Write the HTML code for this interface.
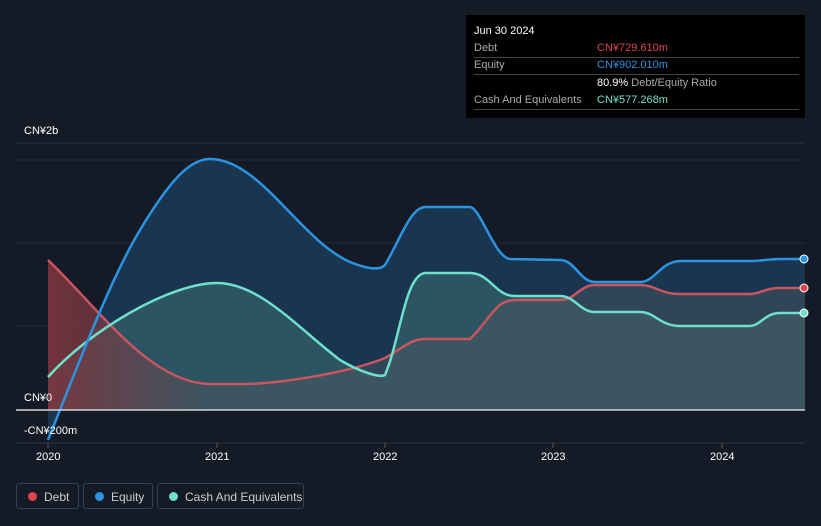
<!DOCTYPE html>
<html><head><meta charset="utf-8"><style>
body{margin:0;width:821px;height:526px;background:#151b26;font-family:"Liberation Sans",sans-serif;overflow:hidden;position:relative}
.tt{position:absolute;left:466px;top:15px;width:339px;height:103px;background:#000;color:#fff;font-size:11px}
.tt .r{position:absolute;left:8px;right:6px;border-bottom:1px solid #444;height:17px;line-height:17px;color:#aaa}
.tt .v{position:absolute;left:123px}
.lg{position:absolute;top:483px;height:26px;border:1px solid #3a414c;border-radius:3px;color:#ccc;font-size:12px;line-height:26px;box-sizing:border-box}
.lg i{position:absolute;left:11px;top:8px;width:9px;height:9px;border-radius:50%}
.lg span{position:absolute;left:27px}
.ax{position:absolute;color:#fff;font-size:11px}
</style></head><body>
<svg width="821" height="526" style="position:absolute;left:0;top:0">
<defs><linearGradient id="rg" x1="0" x2="1" y1="0" y2="0"><stop offset="0" stop-color="#8a2f38" stop-opacity="0.75"/><stop offset="1" stop-color="#8a2f38" stop-opacity="0"/></linearGradient></defs>
<line x1="16" y1="143" x2="805" y2="143" stroke="#2e3540"/>
<line x1="16" y1="160" x2="805" y2="160" stroke="#232a35"/>
<line x1="16" y1="243" x2="805" y2="243" stroke="#232a35"/>
<line x1="16" y1="326" x2="805" y2="326" stroke="#232a35"/>
<line x1="16" y1="443" x2="805" y2="443" stroke="#2e3540"/>
<path d="M48,440 C80,360 110,280 140,230 C170,180 190,159 210,159 C260,159 300,240 350,262 C370,270 380,270 385,265 C400,240 410,208 425,207 L470,207 C480,207 495,258 510,259 L560,260 C575,260 580,282 595,282 L640,282 C655,282 660,262 680,261 L750,261 C760,261 770,259 780,259 L805,259 L805,410 L48,410Z" fill="#1a3a58" opacity="0.85"/>
<path d="M48,377 C90,330 170,283 217,283 C260,283 300,330 340,360 C360,372 380,378 385,375 C400,340 405,275 425,273 L470,273 C490,273 495,296 515,296 L560,296 C575,296 580,312 595,312 L640,312 C655,312 660,326 680,326 L750,326 C760,326 765,313 780,313 L805,313 L805,410 L48,410Z" fill="#3d6e72" opacity="0.55"/>
<path d="M48,260 C100,310 150,383 210,384 L250,384 C290,382 350,372 385,358 C400,350 410,339 425,339 L470,339 C490,320 495,300 515,300 L560,300 C575,300 580,285 595,285 L640,285 C655,285 660,294 680,294 L750,294 C760,294 765,288 780,288 L805,288 L805,410 L48,410Z" fill="#4a5560" opacity="0.5"/>
<path d="M48,260 C100,310 150,383 210,384 L210,410 L48,410Z" fill="url(#rg)"/>
<path d="M48,260 C100,310 150,383 210,384 L250,384 C290,382 350,372 385,358 C400,350 410,339 425,339 L470,339 C490,320 495,300 515,300 L560,300 C575,300 580,285 595,285 L640,285 C655,285 660,294 680,294 L750,294 C760,294 765,288 780,288 L805,288" fill="none" stroke="#c95560" stroke-width="2.5"/>
<path d="M48,377 C90,330 170,283 217,283 C260,283 300,330 340,360 C360,372 380,378 385,375 C400,340 405,275 425,273 L470,273 C490,273 495,296 515,296 L560,296 C575,296 580,312 595,312 L640,312 C655,312 660,326 680,326 L750,326 C760,326 765,313 780,313 L805,313" fill="none" stroke="#6ee0cc" stroke-width="2.5"/>
<path d="M48,440 C80,360 110,280 140,230 C170,180 190,159 210,159 C260,159 300,240 350,262 C370,270 380,270 385,265 C400,240 410,208 425,207 L470,207 C480,207 495,258 510,259 L560,260 C575,260 580,282 595,282 L640,282 C655,282 660,262 680,261 L750,261 C760,261 770,259 780,259 L805,259" fill="none" stroke="#2b94e2" stroke-width="2.5"/>
<line x1="16" y1="410" x2="805" y2="410" stroke="#cfd3d8" stroke-width="1.5"/>
<circle cx="804" cy="259" r="4" fill="#2b94e2" stroke="#fff"/>
<circle cx="804" cy="288" r="4" fill="#e0454f" stroke="#fff"/>
<circle cx="804" cy="313" r="4" fill="#6ee0cc" stroke="#fff"/>
<g stroke="#555"><line x1="48" y1="443" x2="48" y2="448"/><line x1="217" y1="443" x2="217" y2="448"/><line x1="385" y1="443" x2="385" y2="448"/><line x1="553" y1="443" x2="553" y2="448"/><line x1="722" y1="443" x2="722" y2="448"/></g>
</svg>
<div class="ax" style="left:24px;top:125px">CN¥2b</div>
<div class="ax" style="left:24px;top:392px">CN¥0</div>
<div class="ax" style="left:24px;top:425px">-CN¥200m</div>
<div class="ax" style="left:36px;top:451px">2020</div>
<div class="ax" style="left:205px;top:451px">2021</div>
<div class="ax" style="left:373px;top:451px">2022</div>
<div class="ax" style="left:541px;top:451px">2023</div>
<div class="ax" style="left:710px;top:451px">2024</div>
<div class="tt">
<div style="position:absolute;left:8px;top:10px">Jun 30 2024</div>
<div class="r" style="top:25px">Debt<span class="v" style="color:#e0454f">CN¥729.610m</span></div>
<div class="r" style="top:42px">Equity<span class="v" style="color:#2b94e2">CN¥902.010m</span></div>
<div class="r" style="top:60px;border:none"><span class="v" style="color:#aaa"><b style="color:#fff;font-weight:normal">80.9%</b> Debt/Equity Ratio</span></div>
<div class="r" style="top:77px">Cash And Equivalents<span class="v" style="color:#6ee0cc">CN¥577.268m</span></div>
</div>
<div class="lg" style="left:16px;width:63px"><i style="background:#e0454f"></i><span>Debt</span></div>
<div class="lg" style="left:83px;width:70px"><i style="background:#2b94e2"></i><span>Equity</span></div>
<div class="lg" style="left:157px;width:147px"><i style="background:#6ee0cc"></i><span>Cash And Equivalents</span></div>
</body></html>
